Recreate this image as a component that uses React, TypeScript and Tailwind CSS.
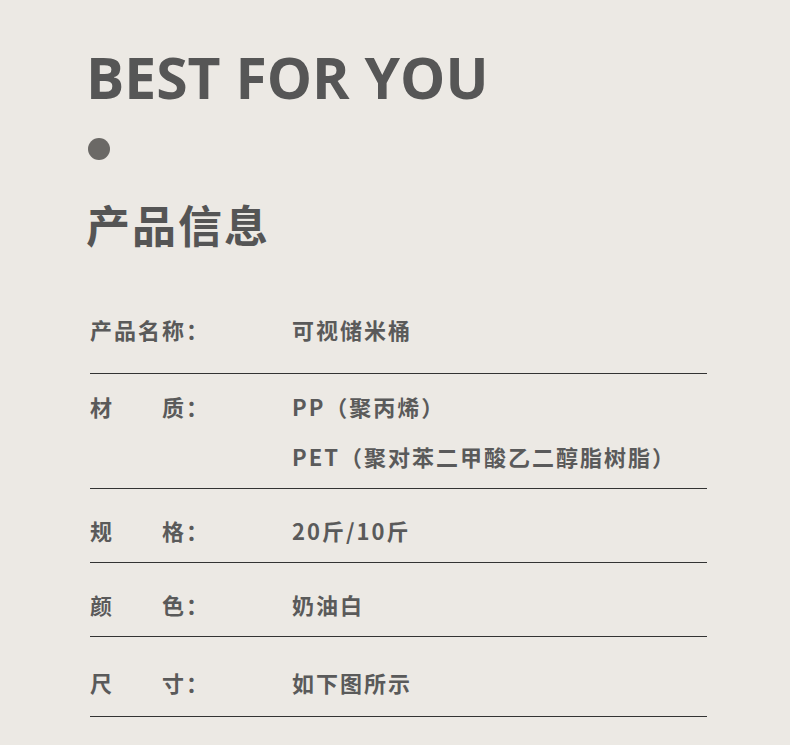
export default function App() {
  const cjk = "font-['Noto_Sans_CJK_SC',sans-serif]"
  return (
    <div className="min-h-screen w-full bg-[#ece9e4] text-[#5a5a5a]">
      <div className="pl-[86px] pt-[42px]">
        <h1 className="font-['Open_Sans',sans-serif] text-[57px] font-bold leading-[70px] tracking-[0px] text-[#565656]">
          BEST FOR YOU
        </h1>
        <div className="mt-[26px] ml-[2px] h-[22px] w-[22px] rounded-full bg-[#6b6966]" />
        <h2 className={`${cjk} mt-[36px] text-[44px] font-bold leading-[56px] tracking-[2px] text-[#555]`}>
          产品信息
        </h2>
      </div>

      <div className={`${cjk} ml-[90px] mt-[65px] w-[617px] text-[22px] font-bold leading-[24px] tracking-[2px]`}>
        <div className="flex border-b border-[#333] pb-[32px]">
          <div className="w-[202px]">产品名称：</div>
          <div>可视储米桶</div>
        </div>
        <div className="flex border-b border-[#333] pt-[20px] pb-[20px]">
          <div className="w-[202px]">材　　质：</div>
          <div className="flex flex-col gap-[26px]">
            <div>PP（聚丙烯）</div>
            <div>PET（聚对苯二甲酸乙二醇脂树脂）</div>
          </div>
        </div>
        <div className="flex border-b border-[#333] pt-[29px] pb-[20px]">
          <div className="w-[202px]">规　　格：</div>
          <div>20斤/10斤</div>
        </div>
        <div className="flex border-b border-[#333] pt-[29px] pb-[20px]">
          <div className="w-[202px]">颜　　色：</div>
          <div>奶油白</div>
        </div>
        <div className="flex border-b border-[#333] pt-[33px] pb-[22px]">
          <div className="w-[202px]">尺　　寸：</div>
          <div>如下图所示</div>
        </div>
      </div>
    </div>
  )
}
